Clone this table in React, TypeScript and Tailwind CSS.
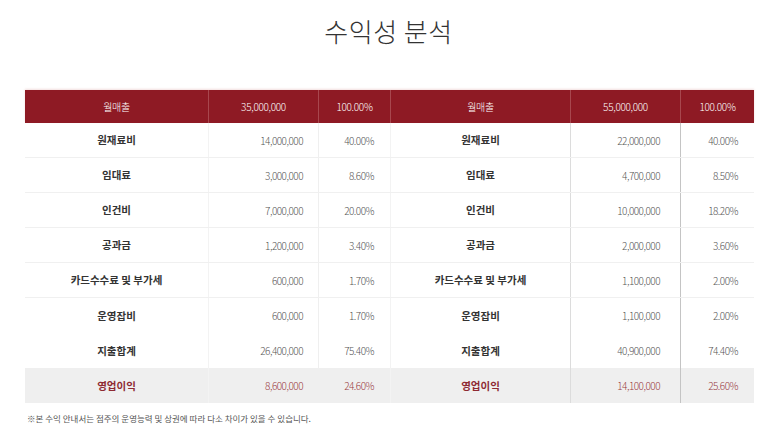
import React from "react";

type Row = { l1: string; v1: string; p1: string; l2: string; v2: string; p2: string; line?: boolean; profit?: boolean };

const rows: Row[] = [
  { l1: "원재료비", v1: "14,000,000", p1: "40.00%", l2: "원재료비", v2: "22,000,000", p2: "40.00%", line: true },
  { l1: "임대료", v1: "3,000,000", p1: "8.60%", l2: "임대료", v2: "4,700,000", p2: "8.50%", line: true },
  { l1: "인건비", v1: "7,000,000", p1: "20.00%", l2: "인건비", v2: "10,000,000", p2: "18.20%", line: true },
  { l1: "공과금", v1: "1,200,000", p1: "3.40%", l2: "공과금", v2: "2,000,000", p2: "3.60%", line: true },
  { l1: "카드수수료 및 부가세", v1: "600,000", p1: "1.70%", l2: "카드수수료 및 부가세", v2: "1,100,000", p2: "2.00%", line: true },
  { l1: "운영잡비", v1: "600,000", p1: "1.70%", l2: "운영잡비", v2: "1,100,000", p2: "2.00%", line: false },
  { l1: "지출합계", v1: "26,400,000", p1: "75.40%", l2: "지출합계", v2: "40,900,000", p2: "74.40%", line: false },
  { l1: "영업이익", v1: "8,600,000", p1: "24.60%", l2: "영업이익", v2: "14,100,000", p2: "25.60%", profit: true },
];

const font = { fontFamily: '"Noto Sans CJK KR", "Noto Sans", sans-serif' };

export default function App() {
  return (
    <div className="w-[773px] h-[443px] bg-white overflow-hidden" style={font}>
      <div className="pt-[16px] h-[90px]">
        <h1 className="text-center text-[26px] leading-[30px] font-light text-[#333] tracking-[0.5px] pl-[4px]">수익성 분석</h1>
      </div>
      <div className="ml-[25px] w-[729px]">
        <div className="grid grid-cols-[183px_110px_72px_180px_110px_74px] h-[33px] bg-[#8e1a24] text-white text-[10px] font-light tracking-[-0.3px] items-stretch shadow-[0_-1px_2px_rgba(200,120,120,0.25)]">
          <div className="flex items-center justify-center">월매출</div>
          <div className="flex items-center justify-center border-l border-[#a8474e]">35,000,000</div>
          <div className="flex items-center justify-center border-l border-[#a8474e]">100.00%</div>
          <div className="flex items-center justify-center border-l border-[#a8474e]">월매출</div>
          <div className="flex items-center justify-center border-l border-[#a8474e]">55,000,000</div>
          <div className="flex items-center justify-center border-l border-[#a8474e]">100.00%</div>
        </div>
        {rows.map((r, i) => {
          const lab = r.profit ? "text-[#8e2a33]" : "text-[#333]";
          const num = r.profit ? "text-[#9a3a42]" : "text-[#555]";
          return (
            <div
              key={i}
              className={`grid grid-cols-[183px_110px_72px_180px_110px_74px] h-[35px] ${r.profit ? "bg-[#efefef]" : ""} ${r.line ? "border-b border-[#f0f0f0]" : ""}`}
            >
              <div className={`flex items-center justify-center text-[10.5px] font-bold ${lab}`}>{r.l1}</div>
              <div className={`flex items-center justify-end pr-[15px] text-[10px] font-light tracking-[-0.5px] border-l border-[#f3f3f3] ${num}`}>{r.v1}</div>
              <div className={`flex items-center justify-end pr-[16px] text-[10px] font-light tracking-[-0.5px] border-l border-[#efefef] ${num}`}>{r.p1}</div>
              <div className={`flex items-center justify-center text-[10.5px] font-bold border-l border-[#f3f3f3] ${lab}`}>{r.l2}</div>
              <div className={`flex items-center justify-end pr-[20px] text-[10px] font-light tracking-[-0.5px] border-l border-[#dcdcdc] ${num}`}>{r.v2}</div>
              <div className={`flex items-center justify-end pr-[16px] text-[10px] font-light tracking-[-0.5px] border-l border-[#c4c4c4] ${num}`}>{r.p2}</div>
            </div>
          );
        })}
        <p className="mt-[9px] ml-[2px] text-[8.5px] text-[#555] leading-[12px]">※본 수익 안내서는 점주의 운영능력 및 상권에 따라 다소 차이가 있을 수 있습니다.</p>
      </div>
    </div>
  );
}
